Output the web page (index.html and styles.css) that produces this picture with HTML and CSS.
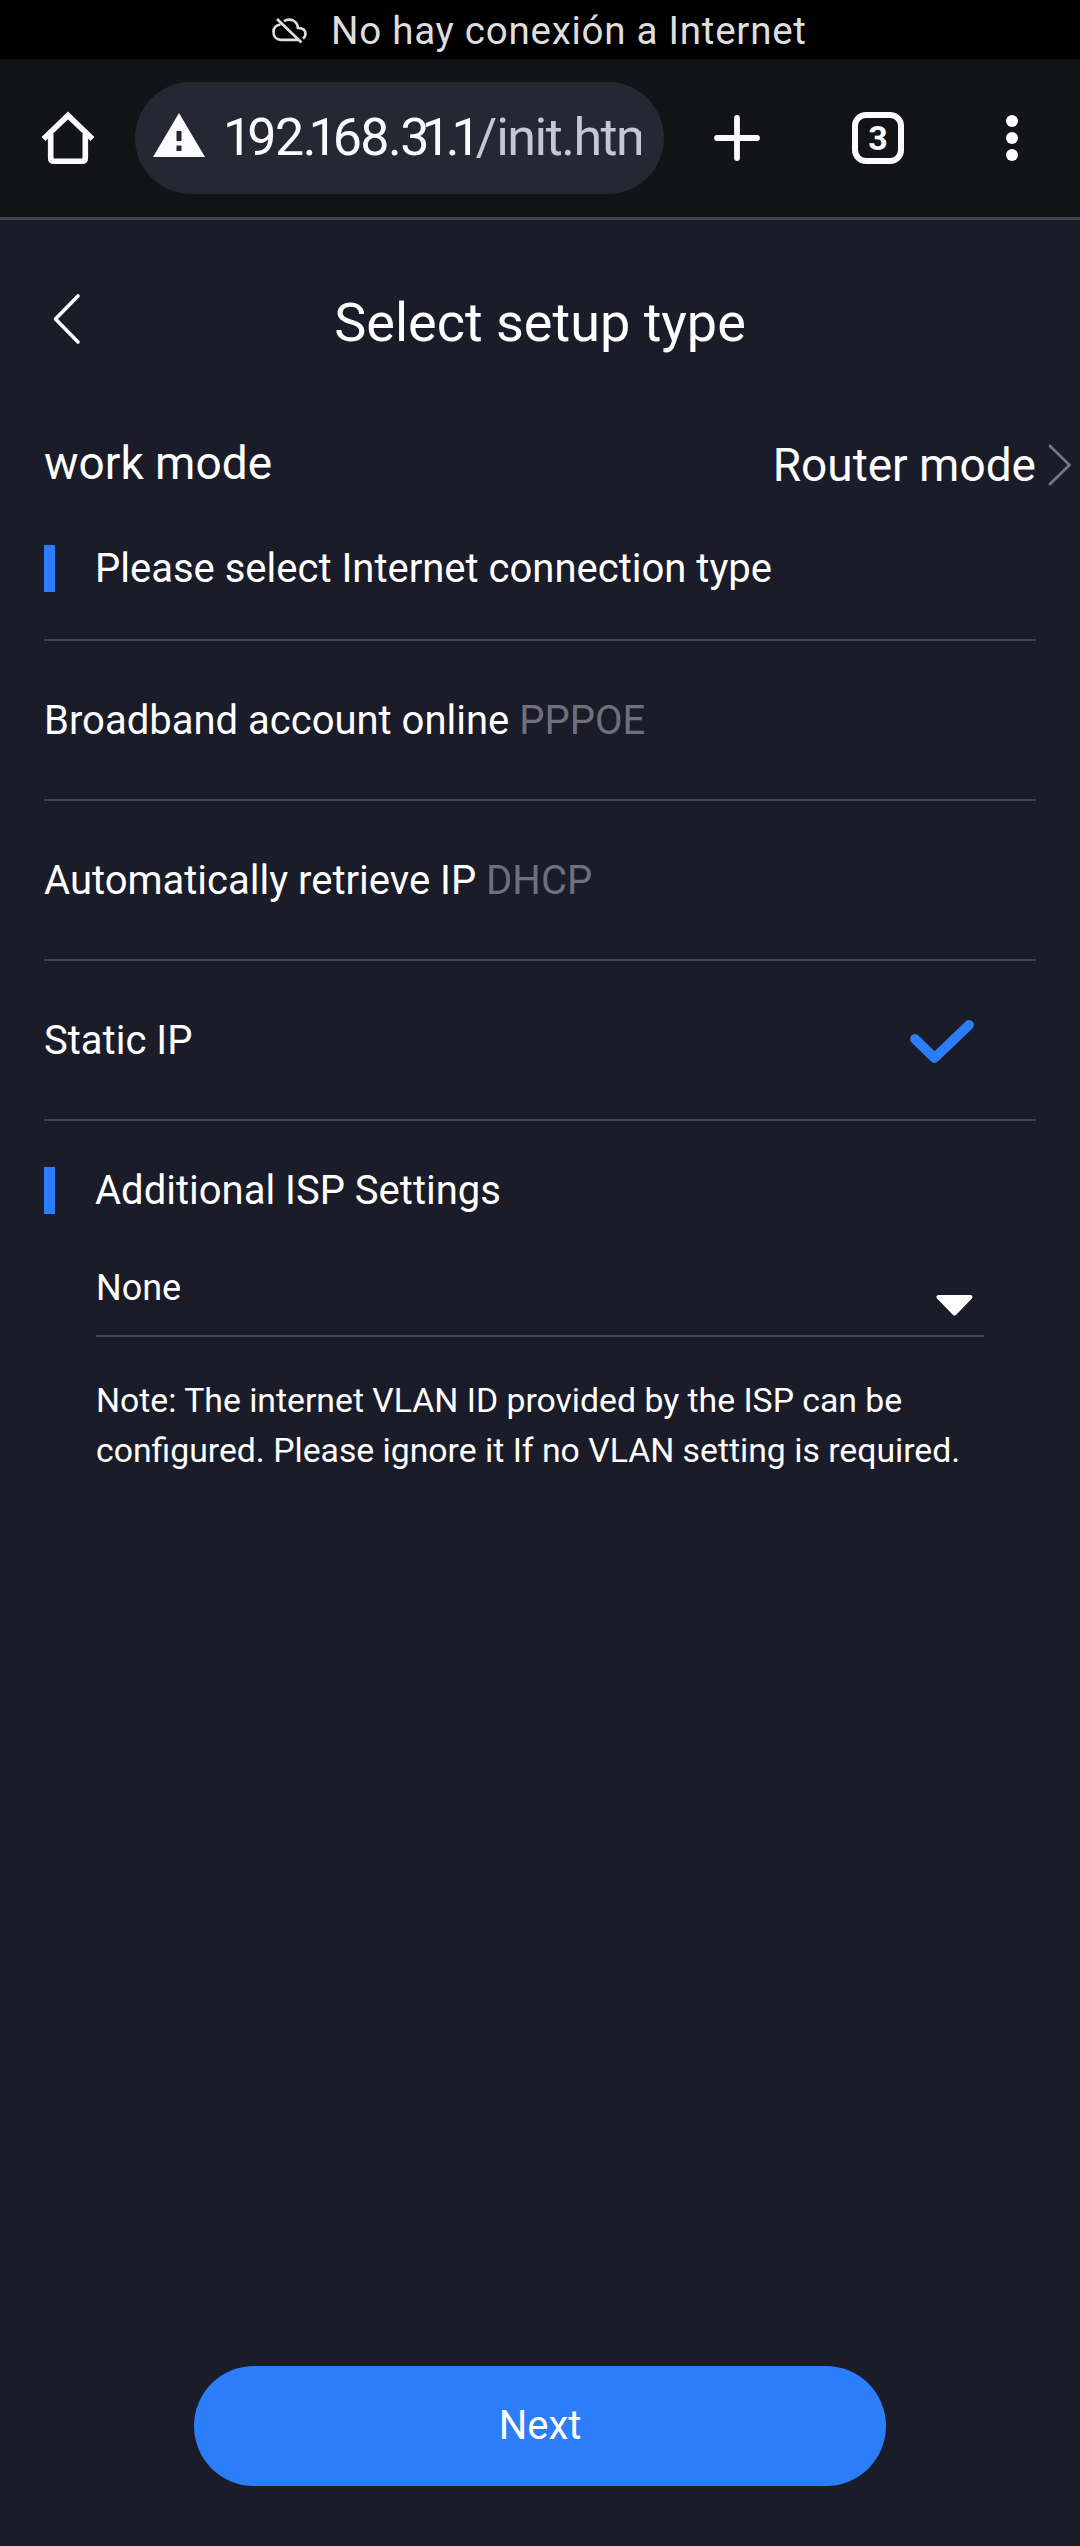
FILE: index.html
```html
<!DOCTYPE html>
<html lang="en">
<head>
<meta charset="utf-8">
<title>Select setup type</title>
<link rel="stylesheet" href="styles.css">
</head>
<body>
<div class="status">
  <svg class="cloud" width="36" height="28" viewBox="0 0 36 28" fill="none" stroke="#dedede" stroke-width="2.7"><path d="M5 2 L29.5 25.5"/><path d="M8.5 7.5 C4 8 1.5 11 1.5 15 C1.5 20 5 22.8 9 22.8 H26"/><path d="M12 4.200 C18 .5 25 3.500 26 11 C31 11 33.500 13.500 33.500 17 C33.500 19 32.500 20.600 31 21.700"/></svg>
  <span class="status-text">No hay conexión a Internet</span>
</div>
<div class="toolbar">
  <svg class="home" width="54" height="54" viewBox="0 0 54 54" fill="none" stroke="#fbfbff" stroke-width="5.600" stroke-linejoin="round"><path d="M2.500 28 L27 4.500 L51.500 28" stroke-linejoin="miter"/><path d="M9.700 23 V47 Q9.700 50.200 13 50.200 H41 Q44.300 50.200 44.300 47 V23"/></svg>
  <div class="address">
    <svg class="warn" width="52" height="44" viewBox="0 0 52 44"><path d="M26 0 L52 44 H0 Z" fill="#fbfbff"/><path d="M23.500 18 h5 v10 h-5 z M23.500 32.500 h5 v5.500 h-5 z" fill="#252832"/></svg>
    <div class="url"><span class="host"><span class="one">1</span>92<span class="tight">.</span><span class="one">1</span>68.<span class="tight">3</span><span class="one">1</span><span class="tight">.</span><span class="one">1</span></span><span class="path"><span class="slash">/</span>init.html</span></div>
  </div>
  <svg class="plus" width="46" height="46" viewBox="0 0 46 46" stroke="#fbfbff" stroke-width="5.800" stroke-linecap="round"><path d="M23 3 V43 M3 23 H43"/></svg>
  <div class="tabs">3</div>
  <svg class="dots" width="12" height="48" viewBox="0 0 12 48" fill="#fbfbff"><circle cx="6" cy="7" r="6"/><circle cx="6" cy="24" r="6"/><circle cx="6" cy="41" r="6"/></svg>
</div>
<main class="page">
  <header class="header">
    <svg class="back" width="30" height="52" viewBox="0 0 30 52" fill="none" stroke="#fff" stroke-width="3.600" stroke-linecap="round" stroke-linejoin="round"><path d="M26 3 L3.500 26 L26 49"/></svg>
    <h1 class="title">Select setup type</h1>
  </header>
  <div class="mode">
    <span class="mode-label">work mode</span>
    <span class="mode-value">Router mode</span>
    <svg class="next-icon" width="24" height="44" viewBox="0 0 24 44" fill="none" stroke="#74757f" stroke-width="2.800" stroke-linecap="round" stroke-linejoin="round"><path d="M2 3 L21.500 22 L2 41"/></svg>
  </div>
  <h2 class="section section-type">Please select Internet connection type</h2>
  <ul class="options">
    <li class="option"><span>Broadband account online <span class="hint">PPPOE</span></span></li>
    <li class="option"><span>Automatically retrieve IP <span class="hint">DHCP</span></span></li>
    <li class="option"><span>Static IP</span><svg class="check" width="66" height="46" viewBox="0 0 66 46" fill="none" stroke="#2c7dfa" stroke-width="9.800" stroke-linecap="round" stroke-linejoin="round"><path d="M6 20 L25.500 39 L60 6"/></svg></li>
  </ul>
  <h2 class="section section-isp">Additional ISP Settings</h2>
  <div class="select"><span class="select-value">None</span><svg class="caret" width="37" height="21" viewBox="0 0 37 21"><path d="M2.500 2 H34.500 L18.500 18.500 Z" fill="#fff" stroke="#fff" stroke-width="4" stroke-linejoin="round"/></svg></div>
  <p class="note">Note: The internet VLAN ID provided by the ISP can be configured. Please ignore it If no VLAN setting is required.</p>
  <button class="next">Next</button>
</main>
</body>
</html>
```
FILE: styles.css
```css
* { box-sizing: border-box; }
body {
  margin: 0;
  width: 1080px;
  height: 2546px;
  display: flex;
  flex-direction: column;
  overflow: hidden;
  background: #1b1c29;
  color: #fff;
  font-family: Roboto, "Liberation Sans", sans-serif;
}
h1, h2, p, ul { margin: 0; padding: 0; font-weight: 400; }
svg { display: block; flex: none; }
.status {
  height: 59px;
  flex: none;
  display: flex;
  align-items: center;
  gap: 23px;
  padding: 2px 0 0 272px;
  background: #000;
  color: #dedede;
}
.status-text { font-size: 38.5px; line-height: 58px; letter-spacing: 0.75px; white-space: nowrap; }
.toolbar {
  height: 161px;
  flex: none;
  display: flex;
  align-items: center;
  padding-left: 41px;
  background: #131418;
  border-bottom: 3px solid #41434d;
}
.address {
  width: 529px;
  height: 112px;
  margin-left: 40px;
  padding: 0 23px 0 18px;
  display: flex;
  align-items: center;
  border-radius: 56px;
  background: #252832;
}
.warn { margin-top: -6px; }
.url {
  flex: 1;
  margin-left: 18px;
  overflow: hidden;
  white-space: nowrap;
  font-size: 52px;
  line-height: 72px;
  letter-spacing: -1.5px;
  color: #fbfbff;
}
.one { letter-spacing: -5px; }
.tight { letter-spacing: -8px; }
.slash { letter-spacing: -1px; }
.path { color: #c5c7d6; }
.plus { margin-left: 50px; }
.tabs {
  width: 52px;
  height: 52px;
  margin-left: 92px;
  border: 6px solid #fbfbff;
  border-radius: 14px;
  font-size: 34px;
  font-weight: 700;
  line-height: 40px;
  text-align: center;
  color: #fbfbff;
}
.dots { margin-left: 102px; }
.page { flex: 1; display: flex; flex-direction: column; padding: 0 44px 60px; }
.header {
  height: 205px;
  display: grid;
  grid-template-columns: 30px 1fr 30px;
  align-items: center;
  padding: 0 8px;
}
.back { margin-top: -7px; }
.title { font-size: 54px; line-height: 64px; text-align: center; white-space: nowrap; }
.mode { height: 80px; display: flex; align-items: center; font-size: 46px; margin-right: -36px; }
.mode-label { flex: 1; margin-bottom: 4px; }
.next-icon { margin-left: 12px; }
.section {
  display: flex;
  align-items: center;
  gap: 40px;
  font-size: 40px;
  line-height: 47px;
}
.section::before { content: ""; width: 11px; height: 47px; background: #2c7dfa; }
.section-type { height: 134px; padding-bottom: 7px; }
.section-isp { height: 139px; }
.options { list-style: none; border-top: 2px solid #41424e; }
.option {
  height: 160px;
  display: flex;
  align-items: center;
  justify-content: space-between;
  border-bottom: 2px solid #41424e;
  font-size: 40px;
}
.hint { color: #6f707b; }
.check { margin-right: 61px; margin-top: 4px; }
.select {
  height: 77px;
  margin: 0 52px;
  display: flex;
  justify-content: space-between;
  border-bottom: 2px solid #41424e;
}
.select-value { font-size: 36px; line-height: 57px; }
.caret { align-self: flex-end; margin: 0 11px 19px 0; }
.note { margin: 39px 0 0 52px; width: 900px; font-size: 33.75px; line-height: 50px; }
.next {
  margin: auto auto 0;
  width: 692px;
  height: 120px;
  padding: 0 0 2px;
  border: 0;
  border-radius: 60px;
  background: #2c7dfa;
  color: #fff;
  font: 40px/47px Roboto, "Liberation Sans", sans-serif;
}
```
